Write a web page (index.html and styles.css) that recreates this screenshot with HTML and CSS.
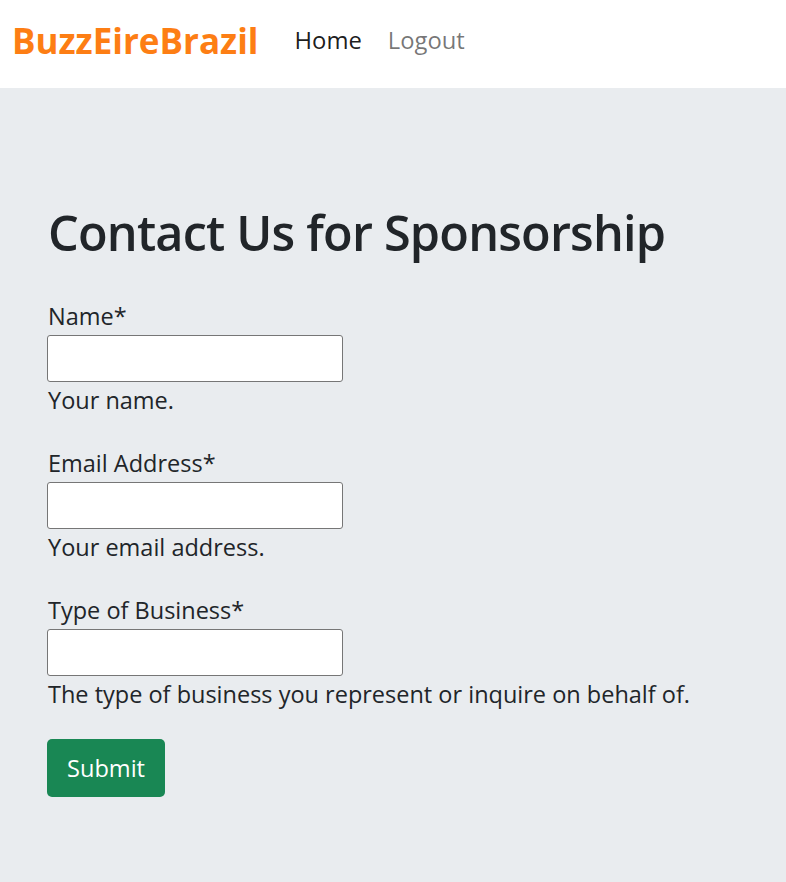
FILE: index.html
```html
<!DOCTYPE html>
<html lang="en">
<head>
<meta charset="utf-8">
<title>Contact Us for Sponsorship</title>
<link rel="stylesheet" href="styles.css">
</head>
<body>
<nav class="navbar">
  <a class="brand" href="#">BuzzEireBrazil</a>
  <ul class="nav">
    <li><a class="nav-link active" href="#">Home</a></li>
    <li><a class="nav-link" href="#">Logout</a></li>
  </ul>
</nav>
<main class="main">
  <h1 class="title">Contact Us for Sponsorship</h1>
  <form class="form">
    <div class="field">
      <label class="label" for="name">Name*</label>
      <input class="input" id="name" type="text">
      <div class="help">Your name.</div>
    </div>
    <div class="field">
      <label class="label" for="email">Email Address*</label>
      <input class="input" id="email" type="email">
      <div class="help">Your email address.</div>
    </div>
    <div class="field">
      <label class="label" for="biz">Type of Business*</label>
      <input class="input" id="biz" type="text">
      <div class="help">The type of business you represent or inquire on behalf of.</div>
    </div>
    <button class="btn" type="button">Submit</button>
  </form>
</main>
</body>
</html>
```

FILE: styles.css
```css
html, body {
  margin: 0;
  padding: 0;
}
body {
  font-family: "Open Sans", "Noto Sans", sans-serif;
  font-size: 23.5px;
  color: #212529;
  background: #e9ecef;
  min-height: 882px;
}
.navbar {
  background: #ffffff;
  height: 88px;
  box-sizing: border-box;
  display: flex;
  align-items: center;
  padding: 0 0 8px 12px;
}
.brand {
  color: #fd7e14;
  font-weight: 700;
  font-size: 35px;
  text-decoration: none;
  margin-right: 36px;
}
.nav {
  list-style: none;
  display: flex;
  margin: 0;
  padding: 0;
  gap: 26px;
}
.nav-link {
  color: rgba(0, 0, 0, 0.55);
  text-decoration: none;
  font-size: 23.8px;
}
.nav-link.active {
  color: rgba(0, 0, 0, 0.9);
}
.main {
  padding: 115px 48px 0;
}
.title {
  font-size: 48.6px;
  font-weight: 600;
  letter-spacing: -0.8px;
  margin: 0 0 36.5px;
  line-height: 58px;
}
.field {
  display: flex;
  flex-direction: column;
  align-items: flex-start;
  margin-bottom: 25px;
}
.label {
  line-height: 37.5px;
}
.input {
  width: 296px;
  height: 47px;
  box-sizing: border-box;
  border: 1px solid #767676;
  border-radius: 3px;
  background: #fff;
  margin: 0 0 0 -1px;
}
.help {
  line-height: 37.5px;
}
.btn {
  background: #198754;
  color: #fff;
  border: none;
  border-radius: 5px;
  width: 118px;
  height: 58px;
  font-family: inherit;
  font-size: 23.6px;
  margin-left: -1px;
}
```
